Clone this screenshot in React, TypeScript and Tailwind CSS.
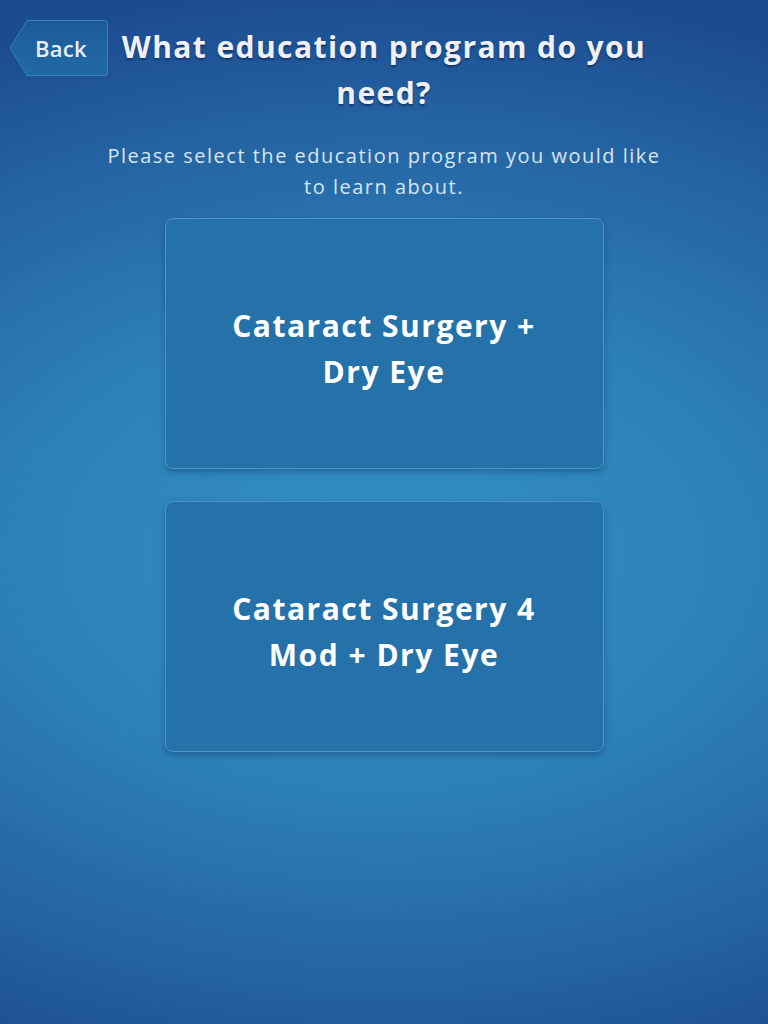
export default function App() {
  const programs = [
    ['Cataract Surgery +', 'Dry Eye'],
    ['Cataract Surgery 4', 'Mod + Dry Eye'],
  ];

  return (
    <div className="min-h-screen w-full bg-[radial-gradient(ellipse_115%_55%_at_50%_54%,#3390c4_0%,#2d80b8_42%,#2565a4_74%,#1c4c90_100%)] font-['Open_Sans','Lato',sans-serif] text-white">
      <header className="grid grid-cols-[120px_1fr_120px] pt-5">
        <button className="relative ml-[10px] flex h-14 w-[98px] items-center justify-center pl-1 text-[22px] font-semibold tracking-[0.3px] text-[#e8edf5]">
          <svg className="absolute inset-0" width="98" height="56" viewBox="0 0 98 56">
            <defs>
              <linearGradient id="backFill" x1="0" y1="0" x2="0" y2="1">
                <stop offset="0" stopColor="#1b5b98" />
                <stop offset="1" stopColor="#216aa6" />
              </linearGradient>
            </defs>
            <path
              d="M17 0.5 H95 Q97.5 0.5 97.5 3 V53 Q97.5 55.5 95 55.5 H17 L0.8 29 Q0 28 0.8 27 Z"
              fill="url(#backFill)"
              stroke="#3a7fb8"
              strokeWidth="1"
            />
          </svg>
          <span className="relative">Back</span>
        </button>
        <h1 className="mt-1 text-center text-[30px] font-bold leading-[46px] tracking-[1.4px] text-[#eef0f6] [text-shadow:0_2px_2px_rgba(10,30,70,0.55)]">
          What education program do you
          <br />
          need?
        </h1>
        <div />
      </header>

      <p className="mx-auto mt-6 w-[640px] text-center text-[20px] leading-[31px] tracking-[1.5px] text-[#d6e6f4]">
        Please select the education program you would like
        <br />
        to learn about.
      </p>

      <main className="mt-4 flex flex-col items-center gap-8">
        {programs.map((lines) => (
          <button
            key={lines.join(' ')}
            className="flex h-[251px] w-[439px] flex-col items-center justify-center rounded-lg border border-[#4b95c8] bg-[#2571a9] pt-[10px] text-[30px] font-bold leading-[46px] tracking-[1.5px] shadow-[0_3px_6px_rgba(10,40,90,0.35)]"
          >
            <span>{lines[0]}</span>
            <span>{lines[1]}</span>
          </button>
        ))}
      </main>
    </div>
  );
}
